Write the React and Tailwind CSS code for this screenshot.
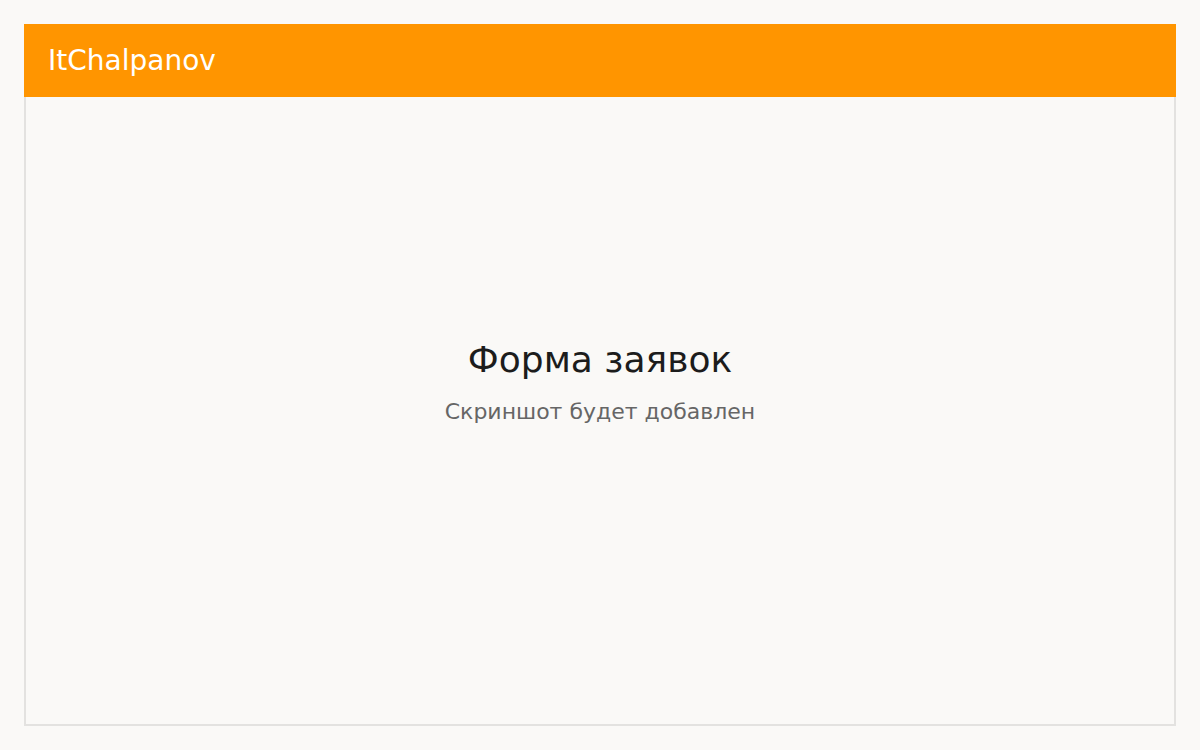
import React from "react";

const App = () => {
  return (
    <div
      className="min-h-screen bg-[#faf9f7] p-6"
      style={{ fontFamily: '"DejaVu Sans", sans-serif' }}
    >
      <div className="flex h-[702px] flex-col">
        <div className="flex h-[73px] items-center bg-[#ff9500] px-6">
          <span className="text-[28px] text-white">ItChalpanov</span>
        </div>
        <div className="flex flex-1 flex-col items-center justify-center border-2 border-t-0 border-[#e3e2e0] pb-15">
          <h1 className="text-[36px] text-[#1c1c1c]">Форма заявок</h1>
          <p className="mt-2 text-[22px] text-[#666666]">Скриншот будет добавлен</p>
        </div>
      </div>
    </div>
  );
};

export default App;
